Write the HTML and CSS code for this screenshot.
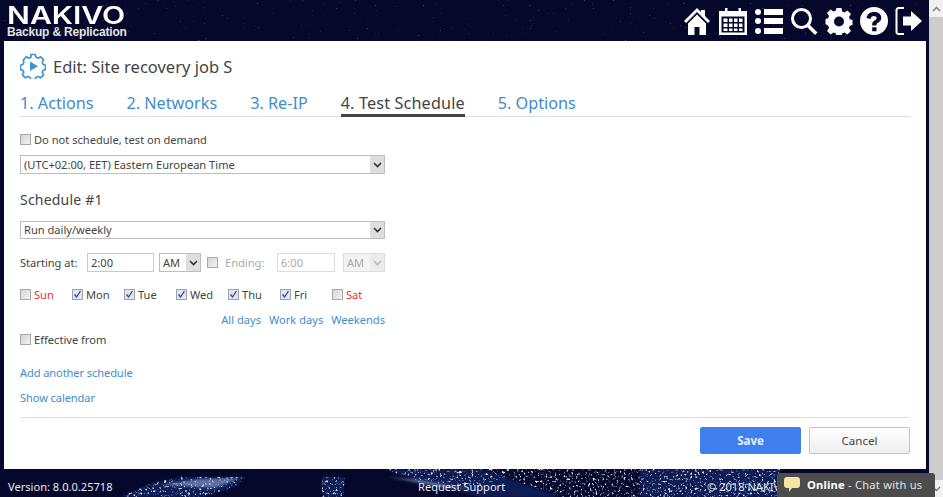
FILE: index.html
```html
<!DOCTYPE html>
<html lang="en">
<head>
<meta charset="utf-8">
<title>NAKIVO Backup &amp; Replication</title>
<link rel="stylesheet" href="styles.css">
</head>
<body>
<div class="app">
  <svg class="lights" width="929" height="497" viewBox="0 0 929 497" aria-hidden="true">
    <defs>
      <filter id="speck" x="0" y="0" width="100%" height="100%">
        <feTurbulence type="fractalNoise" baseFrequency="0.42" numOctaves="2" seed="7" result="n"/>
        <feColorMatrix in="n" type="matrix" values="0 0 0 0 .72  0 0 0 0 .8  0 0 0 0 1  3.4 3.4 0 0 -3.7"/>
        <feComposite in2="SourceAlpha" operator="in"/>
        <feGaussianBlur stdDeviation=".45"/>
      </filter>
      <filter id="faint" x="0" y="0" width="100%" height="100%">
        <feTurbulence type="fractalNoise" baseFrequency="0.6" numOctaves="1" seed="3" result="n"/>
        <feColorMatrix in="n" type="matrix" values="0 0 0 0 .3  0 0 0 0 .34  0 0 0 0 .55  3 3 0 0 -4.1"/>
        <feComposite in2="SourceAlpha" operator="in"/>
        <feGaussianBlur stdDeviation=".5"/>
      </filter>
      <filter id="soft"><feGaussianBlur stdDeviation="1.3"/></filter>
    </defs>
    <path filter="url(#faint)" d="M0 0H929V41H0Z"/>
    <path class="land" filter="url(#soft)" d="M120 497L150 484 178 477 245 477 235 487 205 497ZM322 477H345L343 497H322ZM385 469H480L505 477 560 497H640V469H780V497H480L420 482Z"/>
    <g filter="url(#speck)">
      <path d="M120 497L150 484 178 477 245 477 235 487 205 497Z"/>
      <path d="M322 477H345L343 497H322Z"/>
      <path d="M385 469H640V497H560L505 477 480 487 420 482Z"/>
      <path d="M640 469H780V497H640Z"/>
    </g>
    <g class="glow" filter="url(#soft)">
      <path d="M160 485L200 479 240 478 215 488Z"/>
      <path d="M388 477L420 480 470 489 440 487Z"/>
    </g>
  </svg>

  <div class="viewport">
    <header class="topbar">
      <div class="logo">
        <span class="logo-name">NAKIVO</span>
        <span class="logo-sub">Backup &amp; Replication</span>
      </div>
      <nav class="tools">
        <svg class="tool" width="28" height="28" viewBox="0 0 28 28"><path d="M14 1L1 14l2 2L14 5l11 11 2-2-5-5V3h-4v2ZM5 16.500V28h6.500v-8h5v8H23V16.500L14 7.500Z"/></svg>
        <svg class="tool" width="30" height="28" viewBox="0 0 30 28"><path fill-rule="evenodd" d="M1 4h6V1h2.500v3h11V1H23v3h6v24H1ZM3.500 9.500v16h23v-16Z"/><path d="M5.500 11.500h4v3.500h-4Zm5.500 0h3.500v3.500H11Zm5 0h3.500v3.500H16Zm5 0h3.500v3.500H21ZM5.500 16.500h4V20h-4Zm5.500 0h3.500V20H11Zm5 0h3.500V20H16Zm5 0h3.500V20H21ZM5.500 21.500h4v2.500h-4Zm5.500 0h3.500v2.500H11Zm5 0h3.500v2.500H16Zm5 0h3.500v2.500H21Z"/></svg>
        <svg class="tool" width="28" height="28" viewBox="0 0 28 28"><circle cx="3" cy="5" r="3"/><circle cx="3" cy="14" r="3"/><circle cx="3" cy="24" r="3"/><path d="M9 2h19v6H9Zm0 9h19v6H9Zm0 10h19v6H9Z"/></svg>
        <svg class="tool" width="28" height="28" viewBox="0 0 28 28"><path fill-rule="evenodd" d="M11.500 1a10.500 10.500 0 1 0 0 21 10.500 10.500 0 0 0 0-21Zm0 3a7.500 7.500 0 1 1 0 15 7.500 7.500 0 0 1 0-15Z"/><path d="M18 16l9.500 9.500-2.500 2.500-9.500-9.500Z"/></svg>
        <svg class="tool" width="28" height="28" viewBox="0 0 28 28"><path fill-rule="evenodd" d="M11.500 1h5l.7 3.600 2.200.9 3-2 3.600 3.600-2 3 .9 2.200 2.600.7v5l-2.600.7-.9 2.200 2 3-3.600 3.600-3-2-2.200.9-.7 2.600h-5l-.7-2.600-2.200-.9-3 2-3.600-3.600 2-3-.9-2.200L.5 17v-5l2.600-.7.9-2.200-2-3 3.600-3.600 3 2 2.200-.9ZM14 9.500a5 5 0 1 0 0 10 5 5 0 0 0 0-10Z"/></svg>
        <svg class="tool" width="28" height="28" viewBox="0 0 28 28"><path fill-rule="evenodd" d="M14 0a14 14 0 1 0 0 28 14 14 0 0 0 0-28Zm-1.800 18.500h4.300v-1.200c0-1.300 4.800-2.200 4.800-6.500C21.300 7 18 5 14 5S7.200 7 6.600 11l4 .9c.3-1.900 1.400-3 3.200-3 1.600 0 2.900.8 2.900 2.100 0 2.300-4.500 2.400-4.500 6.300Zm0 1.700v4h4.300v-4Z"/></svg>
        <svg class="tool" width="28" height="28" viewBox="0 0 28 28"><path d="M9 0v2H4c-.8 0-1.500.5-1.500 1.500v21c0 1 .7 1.500 1.500 1.500h5v2H4c-2.500 0-3.500-1.500-3.500-3.500v-21C.5 1.500 1.500 0 4 0ZM8 9.500h8V4l11 10-11 10v-5.500H8Z"/></svg>
      </nav>
    </header>

    <main class="panel">
      <div class="title-row">
        <svg class="job-icon" width="26" height="26" viewBox="0 0 26 26"><path fill="none" stroke="#3f94d6" stroke-width="1.700" stroke-linecap="round" stroke-linejoin="round" d="M10.800 1.500h4.400l.8 2.800c.7.200 1.400.5 2 .9l2.600-1.400 3 3-1.400 2.600c.4.600.7 1.300.9 2l2.400.8v4.400l-2.400.6c-.2.700-.5 1.400-.9 2l1.400 2.600-3 3-2.600-1.400c-.6.400-1.300.7-2 .9l-.8 2.200h-4.400l-.8-2.200c-.7-.2-1.400-.5-2-.9l-2.600 1.400-3-3 1.400-2.600c-.4-.6-.7-1.300-.9-2l-2.400-.6v-4.400l2.400-.8c.2-.7.5-1.400.9-2L3.400 6.800l3-3L9 5.200c.6-.4 1.300-.7 2-.9Z"/><path fill="#3f94d6" d="M10 8.500l8 4.700-8 4.700Z"/></svg>
        <h1 class="title">Edit: Site recovery job S</h1>
      </div>

      <div class="tabs">
        <a class="tab">1. Actions</a>
        <a class="tab">2. Networks</a>
        <a class="tab">3. Re-IP</a>
        <a class="tab tab-active">4. Test Schedule</a>
        <a class="tab">5. Options</a>
      </div>

      <section class="form">
        <label class="check-row row-demand"><span class="check"></span>Do not schedule, test on demand</label>
        <div class="select select-zone"><span>(UTC+02:00, EET) Eastern European Time</span><i class="arrow"><svg width="9" height="6" viewBox="0 0 9 6"><path d="M1 1l3.500 3.500L8 1" fill="none" stroke="#333" stroke-width="1.600"/></svg></i></div>
        <h2 class="sched-title">Schedule #1</h2>
        <div class="select select-run"><span>Run daily/weekly</span><i class="arrow"><svg width="9" height="6" viewBox="0 0 9 6"><path d="M1 1l3.500 3.500L8 1" fill="none" stroke="#333" stroke-width="1.600"/></svg></i></div>

        <div class="time-row">
          <span class="time-label">Starting at:</span>
          <span class="field field-start">2:00</span>
          <div class="select select-ampm"><span>AM</span><i class="arrow"><svg width="9" height="6" viewBox="0 0 9 6"><path d="M1 1l3.500 3.500L8 1" fill="none" stroke="#333" stroke-width="1.600"/></svg></i></div>
          <span class="check check-end"></span>
          <span class="time-label-off">Ending:</span>
          <span class="field field-end">6:00</span>
          <div class="select select-ampm-off"><span>AM</span><i class="arrow"><svg width="9" height="6" viewBox="0 0 9 6"><path d="M1 1l3.500 3.500L8 1" fill="none" stroke="#bbb" stroke-width="1.600"/></svg></i></div>
        </div>

        <div class="days">
          <label class="day red"><span class="check"></span>Sun</label>
          <label class="day"><span class="check on"><svg width="9" height="9" viewBox="0 0 9 9"><path d="M1.500 4.500l2 2.500 4-6" fill="none" stroke="#33458f" stroke-width="1.300"/></svg></span>Mon</label>
          <label class="day"><span class="check on"><svg width="9" height="9" viewBox="0 0 9 9"><path d="M1.500 4.500l2 2.500 4-6" fill="none" stroke="#33458f" stroke-width="1.300"/></svg></span>Tue</label>
          <label class="day"><span class="check on"><svg width="9" height="9" viewBox="0 0 9 9"><path d="M1.500 4.500l2 2.500 4-6" fill="none" stroke="#33458f" stroke-width="1.300"/></svg></span>Wed</label>
          <label class="day"><span class="check on"><svg width="9" height="9" viewBox="0 0 9 9"><path d="M1.500 4.500l2 2.500 4-6" fill="none" stroke="#33458f" stroke-width="1.300"/></svg></span>Thu</label>
          <label class="day"><span class="check on"><svg width="9" height="9" viewBox="0 0 9 9"><path d="M1.500 4.500l2 2.500 4-6" fill="none" stroke="#33458f" stroke-width="1.300"/></svg></span>Fri</label>
          <label class="day red"><span class="check"></span>Sat</label>
        </div>

        <div class="quick-links">
          <a class="link">All days</a>
          <a class="link">Work days</a>
          <a class="link">Weekends</a>
        </div>

        <label class="check-row row-effective"><span class="check"></span>Effective from</label>
        <a class="link link-block link-add">Add another schedule</a>
        <a class="link link-block link-cal">Show calendar</a>
      </section>

      <div class="actions">
        <button class="btn btn-save" type="button">Save</button>
        <button class="btn btn-cancel" type="button">Cancel</button>
      </div>
    </main>

    <footer class="footer">
      <span>Version: 8.0.0.25718</span>
      <span class="foot-mid">Request Support</span>
      <span class="foot-right">© 2018 NAKIVO</span>
    </footer>
  </div>

  <aside class="scrollbar">
    <span class="sb-btn"><svg width="9" height="6" viewBox="0 0 9 6"><path d="M1 5l3.500-3.500L8 5" fill="none" stroke="#777" stroke-width="1.300"/></svg></span>
    <span class="sb-track"></span>
    <span class="sb-btn"><svg width="9" height="6" viewBox="0 0 9 6"><path d="M1 1l3.500 3.500L8 1" fill="none" stroke="#777" stroke-width="1.300"/></svg></span>
  </aside>

  <div class="chat">
    <svg width="16" height="15" viewBox="0 0 16 15"><path fill="#f6e3a6" d="M3 0h10c1.800 0 3 1.200 3 3v5c0 1.800-1.200 3-3 3H8l-3 4v-4H3c-1.800 0-3-1.200-3-3V3c0-1.800 1.200-3 3-3Z"/></svg>
    <span class="chat-text"><b>Online</b> - Chat with us</span>
  </div>
</div>
</body>
</html>
```
FILE: styles.css
```css
* { box-sizing: border-box; }
html, body { margin: 0; height: 100%; overflow: hidden; }
body {
  font-family: "Noto Sans", "Open Sans", sans-serif;
  font-size: 11.1px;
  color: #444;
  background: #05082a;
}
.app {
  position: relative;
  display: flex;
  width: 943px;
  height: 497px;
  overflow: hidden;
  background: #05082a;
}
.lights { position: absolute; left: 0; top: 0; }
.lights .land { fill: #0a1a52; }
.lights .glow { fill: #9fb4e0; opacity: .55; }

.viewport {
  position: relative;
  flex: 1;
  min-width: 0;
  display: flex;
  flex-direction: column;
  padding: 0 3px 0 4px;
}
.scrollbar {
  position: relative;
  width: 14px;
  display: flex;
  flex-direction: column;
  background: #cdcdcd;
}
.sb-btn {
  height: 17px;
  background: #f0f0f0;
  display: flex;
  align-items: center;
  justify-content: center;
}
.sb-track { flex: 1; }

.topbar {
  height: 41px;
  display: flex;
  justify-content: space-between;
  color: #fff;
}
.logo {
  display: flex;
  flex-direction: column;
  padding: 4px 0 0 3px;
}
.logo-name {
  font-family: "Inter", sans-serif;
  font-size: 24.5px;
  font-weight: 600;
  line-height: 22px;
  transform-origin: left center;
  transform: scaleX(1.23);
}
.logo-sub {
  font-family: "Liberation Sans", sans-serif;
  font-size: 12px;
  font-weight: 700;
  line-height: 13px;
  letter-spacing: -.18px;
  color: #e4e4e4;
}
.tools {
  display: flex;
  gap: 7px;
  padding: 7px 0 0;
  margin-right: 3px;
}
.tool { fill: #fff; display: block; }

.panel {
  height: 428px;
  background: #fff;
  padding: 12px 16px 0;
  display: flex;
  flex-direction: column;
  flex: none;
}
.title-row { display: flex; align-items: center; gap: 7px; height: 26px; }
.job-icon { display: block; flex: none; }
.title {
  margin: 0;
  font-size: 16.5px;
  font-weight: 400;
  color: #444;
}
.tabs {
  display: flex;
  gap: 33px;
  height: 26px;
  margin-top: 12px;
  border-bottom: 1px solid #ddd;
  flex: none;
}
.tab {
  font-size: 16.2px;
  line-height: 24px;
  height: 26px;
  color: #3f8dcb;
  white-space: nowrap;
}
.tab-active {
  color: #444;
  border-bottom: 3px solid #444;
  letter-spacing: .15px;
}

.form { flex: 1; display: flex; flex-direction: column; align-items: flex-start; }
.check {
  display: inline-flex;
  align-items: center;
  justify-content: center;
  width: 11px;
  height: 11px;
  margin-right: 3px;
  flex: none;
  background: linear-gradient(135deg, #d4d4d4, #f3f3f3);
  border: 1px solid #a8a8a8;
}
.check.on { background: #e0e5f2; border-color: #9aa3b8; }
.check-row { display: flex; align-items: center; height: 16px; }
.row-demand { margin-top: 14px; }
.select {
  display: flex;
  align-items: center;
  justify-content: space-between;
  border: 1px solid #bdbdbd;
  background: #fff;
  padding-left: 3px;
  color: #444;
}
.arrow {
  width: 14px;
  align-self: stretch;
  display: flex;
  align-items: center;
  justify-content: center;
  background: #dedede;
}
.select-zone { width: 365px; height: 19px; margin-top: 8px; }
.sched-title {
  margin: 16px 0 0;
  font-size: 14px;
  font-weight: 400;
  line-height: 20px;
  letter-spacing: .2px;
}
.select-run { width: 365px; height: 18px; margin-top: 11px; padding-bottom: 1px; }
.select-run .arrow { margin-bottom: -1px; }

.time-row { display: flex; align-items: center; width: 365px; height: 19px; margin-top: 14px; }
.time-label { width: 67px; }
.field {
  display: flex;
  align-items: center;
  height: 19px;
  border: 1px solid #c9c9c9;
  padding-left: 3px;
}
.field-start { width: 67px; }
.select-ampm { width: 42px; height: 19px; margin-left: 5px; }
.check-end { margin: 0 7px 0 6px; }
.time-label-off { width: 52px; color: #aaa; }
.field-end { width: 58px; color: #aaa; border-color: #ddd; }
.select-ampm-off {
  width: 42px;
  height: 19px;
  margin-left: 8px;
  color: #aaa;
  border-color: #ddd;
  background: #f3f3f3;
}
.select-ampm-off .arrow { background: #ececec; }

.days { display: grid; grid-template-columns: repeat(7, 52px); margin-top: 14px; height: 17px; }
.day { display: flex; align-items: center; }
.red { color: #e8303a; }
.quick-links {
  display: flex;
  justify-content: flex-end;
  gap: 8px;
  width: 365px;
  margin-top: 8px;
  height: 17px;
  line-height: 17px;
}
.link { color: #3f8dcb; white-space: nowrap; }
.link-block { display: block; line-height: 17px; letter-spacing: -.1px; }
.row-effective { margin-top: 3px; }
.link-add { margin-top: 17px; }
.link-cal { margin-top: 8px; }

.actions {
  display: flex;
  justify-content: flex-end;
  gap: 8px;
  height: 52px;
  padding-top: 9px;
  border-top: 1px solid #ddd;
  flex: none;
}
.btn {
  width: 101px;
  height: 27px;
  font: 11.5px "Noto Sans", sans-serif;
  border-radius: 2px;
}
.btn-save { background: #3f80ee; border: 1px solid #3f80ee; color: #e8effc; font-weight: 700; }
.btn-cancel { background: linear-gradient(#fff, #eee); border: 1px solid #c4c4c4; color: #444; }

.footer {
  flex: 1;
  position: relative;
  display: flex;
  align-items: center;
  padding: 6px 0 0 4px;
  color: #e6e9f2;
}
.foot-mid { position: absolute; left: 414px; }
.foot-right { position: absolute; left: 703px; }

.chat {
  position: absolute;
  left: 777px;
  top: 473px;
  width: 158px;
  height: 24px;
  display: flex;
  align-items: center;
  gap: 7px;
  padding: 0 0 2px 7px;
  background: #4c4c4c;
  color: #e0e0e0;
  border-radius: 3px 3px 0 0;
  font-size: 11.2px;
}
.chat-text { white-space: nowrap; letter-spacing: .2px; }
.chat-text b { color: #fff; }
```
